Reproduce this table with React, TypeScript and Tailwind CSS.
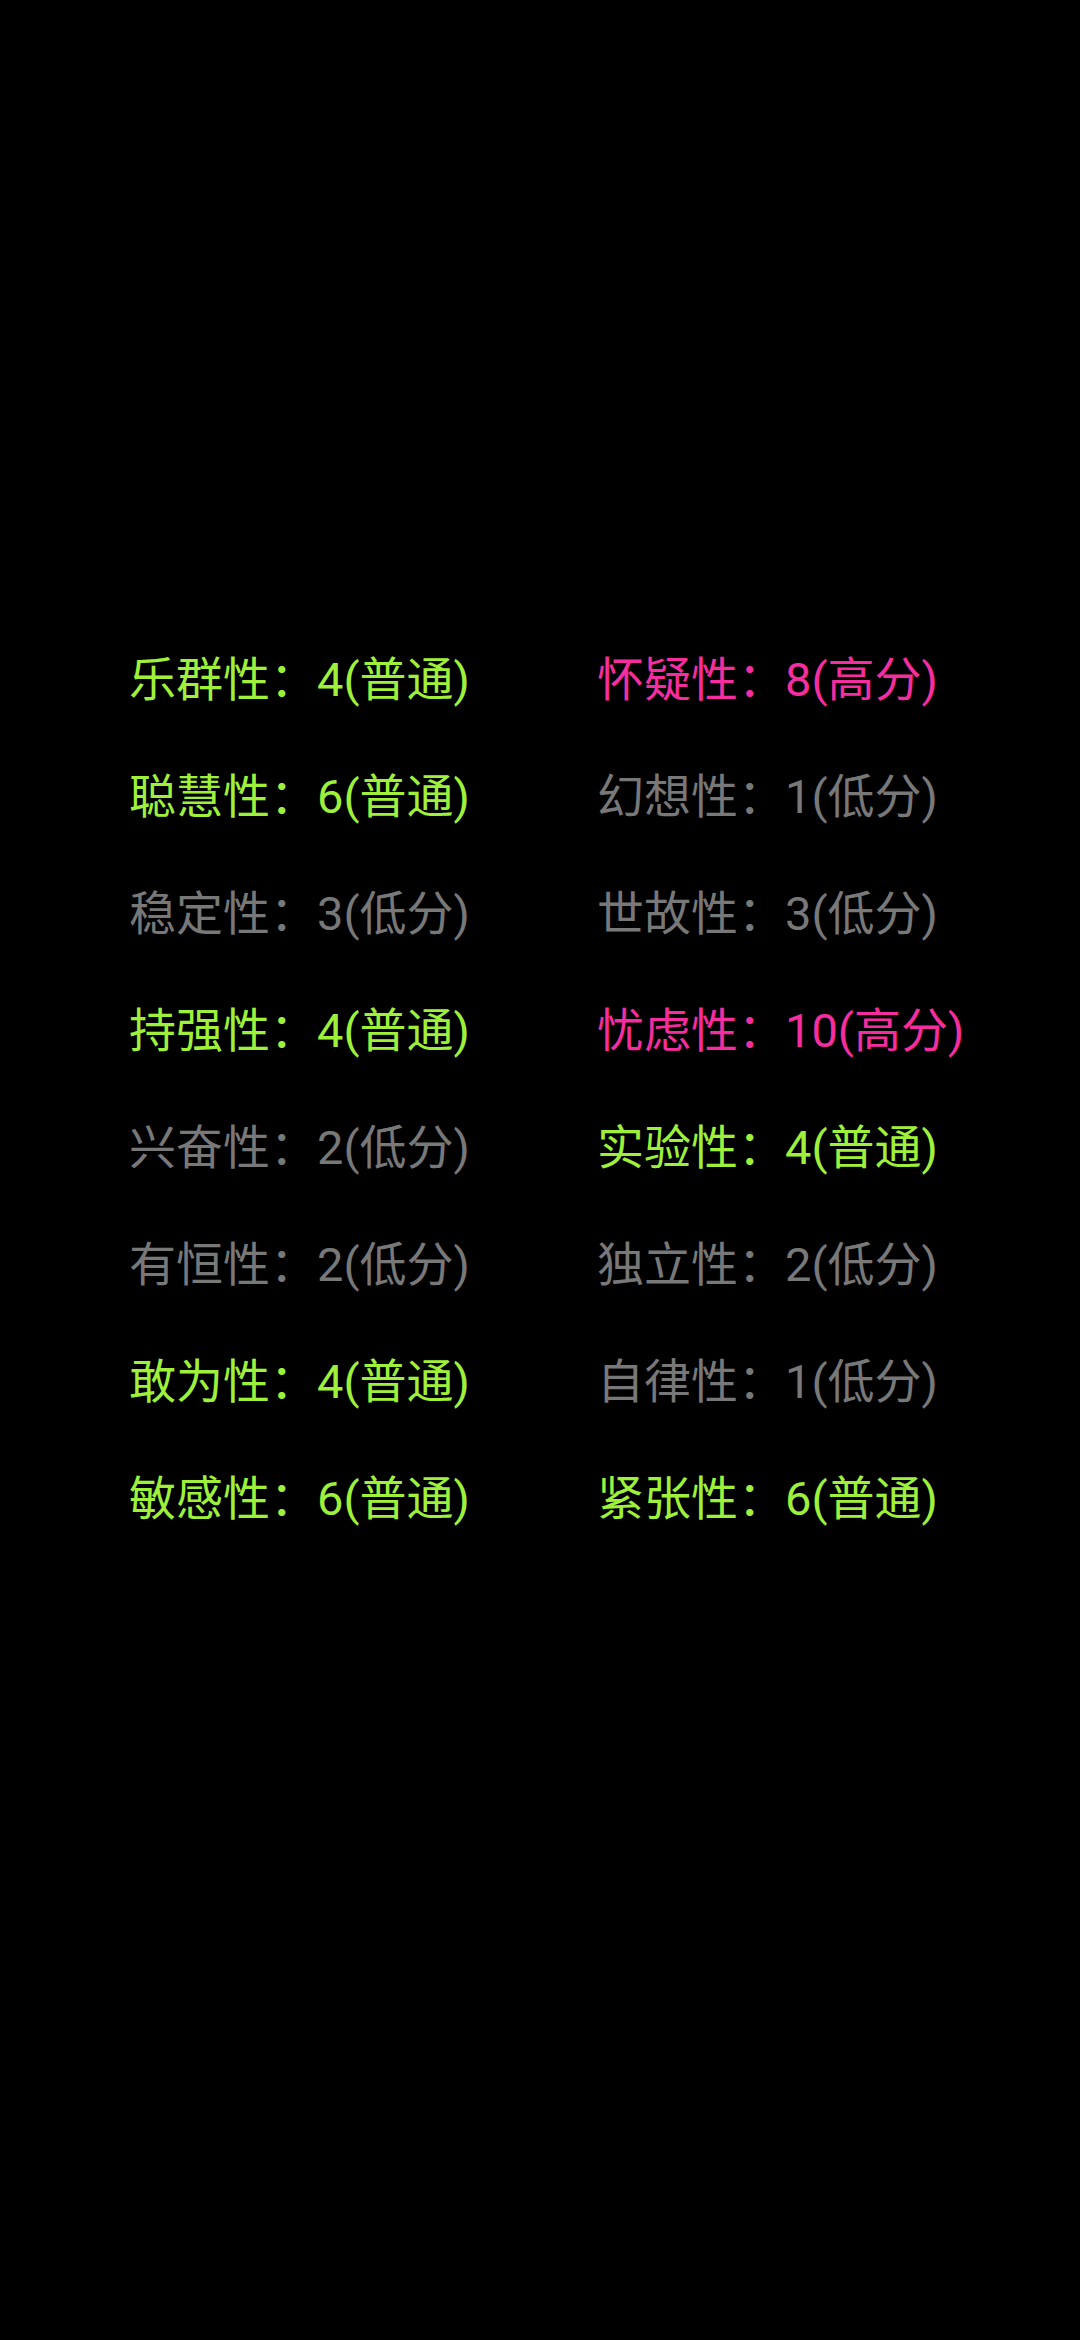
import React from "react";

type Item = { label: string; value: string; tone: "g" | "p" | "n" };

const rows: [Item, Item][] = [
  [{ label: "乐群性", value: "4(普通)", tone: "g" }, { label: "怀疑性", value: "8(高分)", tone: "p" }],
  [{ label: "聪慧性", value: "6(普通)", tone: "g" }, { label: "幻想性", value: "1(低分)", tone: "n" }],
  [{ label: "稳定性", value: "3(低分)", tone: "n" }, { label: "世故性", value: "3(低分)", tone: "n" }],
  [{ label: "持强性", value: "4(普通)", tone: "g" }, { label: "忧虑性", value: "10(高分)", tone: "p" }],
  [{ label: "兴奋性", value: "2(低分)", tone: "n" }, { label: "实验性", value: "4(普通)", tone: "g" }],
  [{ label: "有恒性", value: "2(低分)", tone: "n" }, { label: "独立性", value: "2(低分)", tone: "n" }],
  [{ label: "敢为性", value: "4(普通)", tone: "g" }, { label: "自律性", value: "1(低分)", tone: "n" }],
  [{ label: "敏感性", value: "6(普通)", tone: "g" }, { label: "紧张性", value: "6(普通)", tone: "g" }],
];

function Cell({ item }: { item: Item }) {
  const color =
    item.tone === "g" ? "text-[#9ff03a]" : item.tone === "p" ? "text-[#f52d9e]" : "text-[#787878]";
  return (
    <div className={`h-[117px] flex items-center whitespace-nowrap text-[47px] ${color}`}>
      <span>{item.label}</span>
      <span className="inline-block w-[1em] text-left">：</span>
      <span>{item.value}</span>
    </div>
  );
}

export default function App() {
  return (
    <div
      className="w-[1080px] h-[2340px] bg-black pt-[622px] pl-[129px]"
      style={{ fontFamily: 'Roboto, "Noto Sans CJK SC", sans-serif' }}
    >
      <div className="grid grid-cols-[468px_auto]">
        {rows.map(([a, b], i) => (
          <React.Fragment key={i}>
            <Cell item={a} />
            <Cell item={b} />
          </React.Fragment>
        ))}
      </div>
    </div>
  );
}
